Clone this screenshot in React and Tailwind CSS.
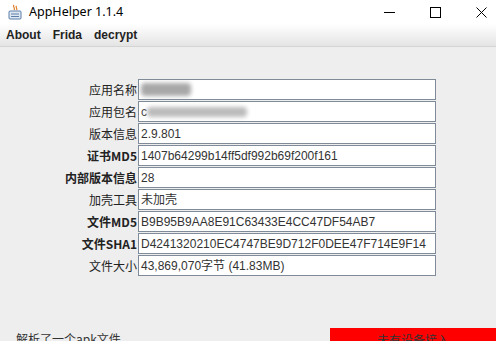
const rows = [
  { label: "应用名称", value: "xxxxxxx", blur: "short" },
  { label: "应用包名", value: "com.xxx.xxx.xxxxx.xxx", blur: "long" },
  { label: "版本信息", value: "2.9.801" },
  { label: "证书MD5", value: "1407b64299b14ff5df992b69f200f161", bold: true },
  { label: "内部版本信息", value: "28", bold: true },
  { label: "加壳工具", value: "未加壳" },
  { label: "文件MD5", value: "B9B95B9AA8E91C63433E4CC47DF54AB7", bold: true },
  { label: "文件SHA1", value: "D4241320210EC4747BE9D712F0DEE47F714E9F14", bold: true },
  { label: "文件大小", value: "43,869,070字节 (41.83MB)" },
];

function JavaIcon() {
  return (
    <svg width="16" height="16" viewBox="0 0 16 16">
      <path d="M7 1c-2 2 2 3 0 5M9.5 2c-1.5 1.5 1.5 2.5 0 4" stroke="#e07a20" strokeWidth="1.2" fill="none" />
      <rect x="2" y="7" width="12" height="8" rx="1" fill="#dfe8f2" stroke="#5b7fa8" />
      <path d="M4 10h8M4 12.5h8" stroke="#5b7fa8" strokeWidth="1" />
    </svg>
  );
}

export default function App() {
  const cjk = { fontFamily: '"Noto Sans CJK SC", "Noto Sans", sans-serif' };
  const latin = { fontFamily: '"Liberation Sans", "Noto Sans CJK SC", sans-serif' };

  return (
    <div className="w-[496px] h-[341px] overflow-hidden bg-[#eeeeee] flex flex-col">
      {/* Title bar */}
      <div className="h-[24px] bg-white flex items-center shrink-0">
        <div className="pl-[7px] pr-[6px] flex items-center">
          <JavaIcon />
        </div>
        <span className="text-[12.5px] text-black" style={{ fontFamily: '"Noto Sans", sans-serif' }}>
          AppHelper 1.1.4
        </span>
        <div className="ml-auto mr-[-8px] flex items-center h-full">
          <div className="w-[46px] flex justify-center">
            <svg width="11" height="11" viewBox="0 0 11 11">
              <path d="M0 5.5h11" stroke="#000" strokeWidth="1" />
            </svg>
          </div>
          <div className="w-[46px] flex justify-center">
            <svg width="11" height="11" viewBox="0 0 11 11">
              <rect x="0.5" y="0.5" width="10" height="10" fill="none" stroke="#000" strokeWidth="1" />
            </svg>
          </div>
          <div className="w-[46px] flex justify-center">
            <svg width="11" height="11" viewBox="0 0 11 11">
              <path d="M0.5 0.5l10 10M10.5 0.5l-10 10" stroke="#000" strokeWidth="1" />
            </svg>
          </div>
        </div>
      </div>

      {/* Menu bar */}
      <div
        className="h-[23px] shrink-0 flex items-center gap-[12px] pl-[6px] font-bold text-[12px] text-[#222] bg-gradient-to-b from-white to-[#e4e4e4] border-b border-[#d4d4d4]"
        style={latin}
      >
        <span>About</span>
        <span>Frida</span>
        <span>decrypt</span>
      </div>

      {/* Info rows */}
      <div className="flex flex-col gap-[1px] pt-[32px]">
        {rows.map((r) => (
          <div key={r.label} className="flex items-center h-[21px]">
            <div
              className={`w-[138px] text-right text-[12px] text-[#222] pr-[1px] ${r.bold ? "font-semibold" : ""}`}
              style={cjk}
            >
              {r.label}
            </div>
            <div
              className="w-[298px] h-[21px] bg-white border border-[#7f8b98] flex items-center pl-[2px] text-[12px] text-[#333] whitespace-nowrap overflow-hidden"
              style={latin}
            >
              {r.blur === "short" && (
                <span className="inline-block w-[50px] h-[13px] rounded-sm bg-[#a8a8a8] blur-[2px]" />
              )}
              {r.blur === "long" && (
                <span className="flex items-center">
                  <span className="text-[#444]">c</span>
                  <span className="inline-block w-[100px] h-[10px] rounded-sm bg-[#bbbbbb] blur-[2px]" />
                </span>
              )}
              {!r.blur && r.value}
            </div>
          </div>
        ))}
      </div>

      {/* Status bar */}
      <div className="mt-[52px] flex items-start">
        <div className="w-[330px] pl-[16px] pt-[2px] text-[12px] text-[#333]" style={cjk}>
          解析了一个apk文件
        </div>
        <div className="flex-1 h-[24px] bg-[#ff0000] flex justify-center pt-[3px] text-[12px] text-[#333]" style={cjk}>
          未有设备接入
        </div>
      </div>
    </div>
  );
}
